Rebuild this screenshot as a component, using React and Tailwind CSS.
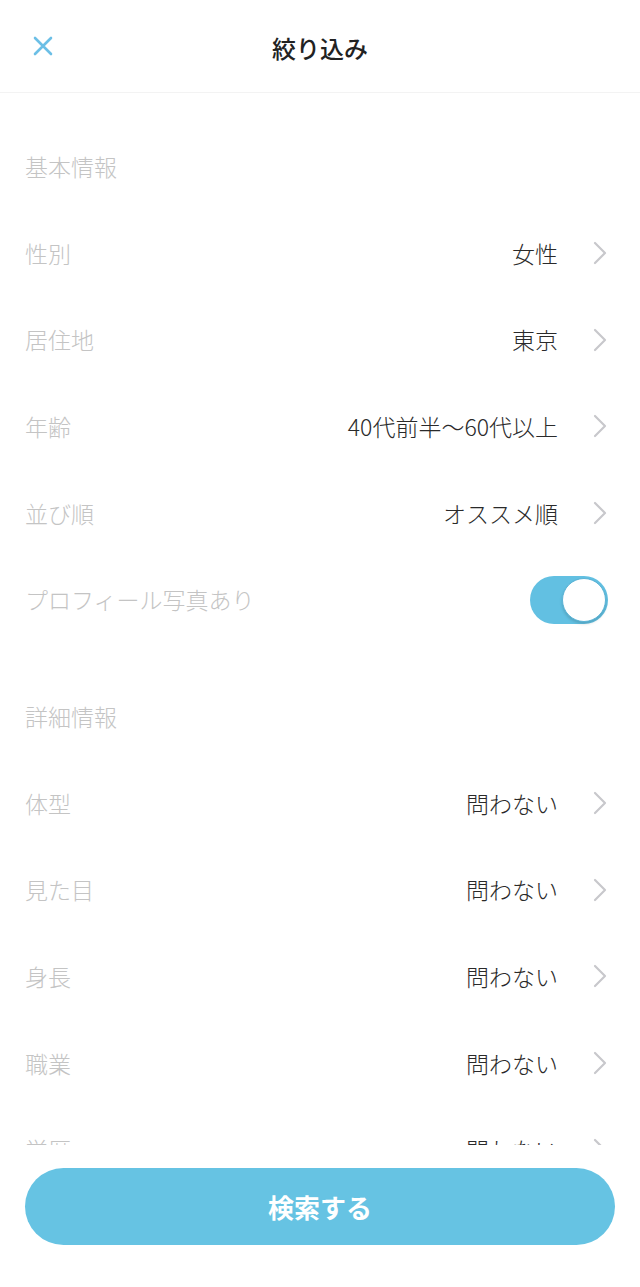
import React, { useState } from 'react'

const FONT = { fontFamily: '"Noto Sans CJK JP", "Noto Sans", sans-serif' }

function Chevron() {
  return (
    <svg className="w-[14px] h-[24px] ml-[35px] shrink-0" viewBox="0 0 14 24" fill="none">
      <polyline points="2,2 12,12 2,22" stroke="#c8c8cc" strokeWidth="2.2" strokeLinecap="round" strokeLinejoin="round" />
    </svg>
  )
}

function SectionTitle({ children }) {
  return (
    <div className="h-[86.67px] mt-[30px] flex items-center pl-[25px]">
      <span className="text-[23px] font-light text-[#c4c4c4]">{children}</span>
    </div>
  )
}

function SelectRow({ label, value }) {
  return (
    <div className="h-[86.67px] flex items-center pl-[25px] pr-[33px]">
      <span className="text-[23px] font-light text-[#c4c4c4] flex-1">{label}</span>
      <span className="text-[23px] font-light text-[#2a2a2a]">{value}</span>
      <Chevron />
    </div>
  )
}

function ToggleRow({ label, checked, onChange }) {
  return (
    <div className="h-[86.67px] flex items-center pl-[25px] pr-[32px]">
      <span className="text-[23px] font-light text-[#c4c4c4] flex-1">{label}</span>
      <button
        onClick={() => onChange(!checked)}
        className={`w-[78px] h-[48px] rounded-full flex items-center p-[2px] ${checked ? 'bg-[#62c0e2] justify-end' : 'bg-[#e5e5ea] justify-start'}`}
      >
        <span className="w-[44px] h-[44px] rounded-full bg-white border border-[#5ab3d6] shadow-[0_2px_3px_rgba(0,0,0,0.15)]" />
      </button>
    </div>
  )
}

export default function App() {
  const [conFoto, setConFoto] = useState(true)

  return (
    <div className="h-[1287px] w-full bg-white flex flex-col overflow-hidden" style={FONT}>
      {/* cabecera */}
      <div className="h-[93px] shrink-0 border-b border-[#f3f3f3] flex items-center relative">
        <button className="ml-[31px] w-[24px] h-[24px] flex items-center justify-center">
          <svg viewBox="0 0 20 20" className="w-[20px] h-[20px]" fill="none">
            <path d="M2 2 L18 18 M18 2 L2 18" stroke="#6cbfe6" strokeWidth="2.6" strokeLinecap="round" />
          </svg>
        </button>
        <h1 className="absolute left-1/2 -translate-x-1/2 top-[30px] text-[24px] leading-[36px] font-medium text-[#222222]">絞り込み</h1>
      </div>

      {/* lista de filtros */}
      <div className="flex-1 overflow-hidden">
        <SectionTitle>基本情報</SectionTitle>
        <SelectRow label="性別" value="女性" />
        <SelectRow label="居住地" value="東京" />
        <SelectRow label="年齢" value="40代前半〜60代以上" />
        <SelectRow label="並び順" value="オススメ順" />
        <ToggleRow label="プロフィール写真あり" checked={conFoto} onChange={setConFoto} />

        <SectionTitle>詳細情報</SectionTitle>
        <SelectRow label="体型" value="問わない" />
        <SelectRow label="見た目" value="問わない" />
        <SelectRow label="身長" value="問わない" />
        <SelectRow label="職業" value="問わない" />
        <SelectRow label="学歴" value="問わない" />
        <SelectRow label="年収" value="問わない" />
      </div>

      {/* botón inferior */}
      <div className="shrink-0 bg-white pt-[23px] pb-[42px] px-[25px]">
        <button className="w-full h-[77px] rounded-full bg-[#66c3e3] text-white text-[26px] font-bold">
          検索する
        </button>
      </div>
    </div>
  )
}
